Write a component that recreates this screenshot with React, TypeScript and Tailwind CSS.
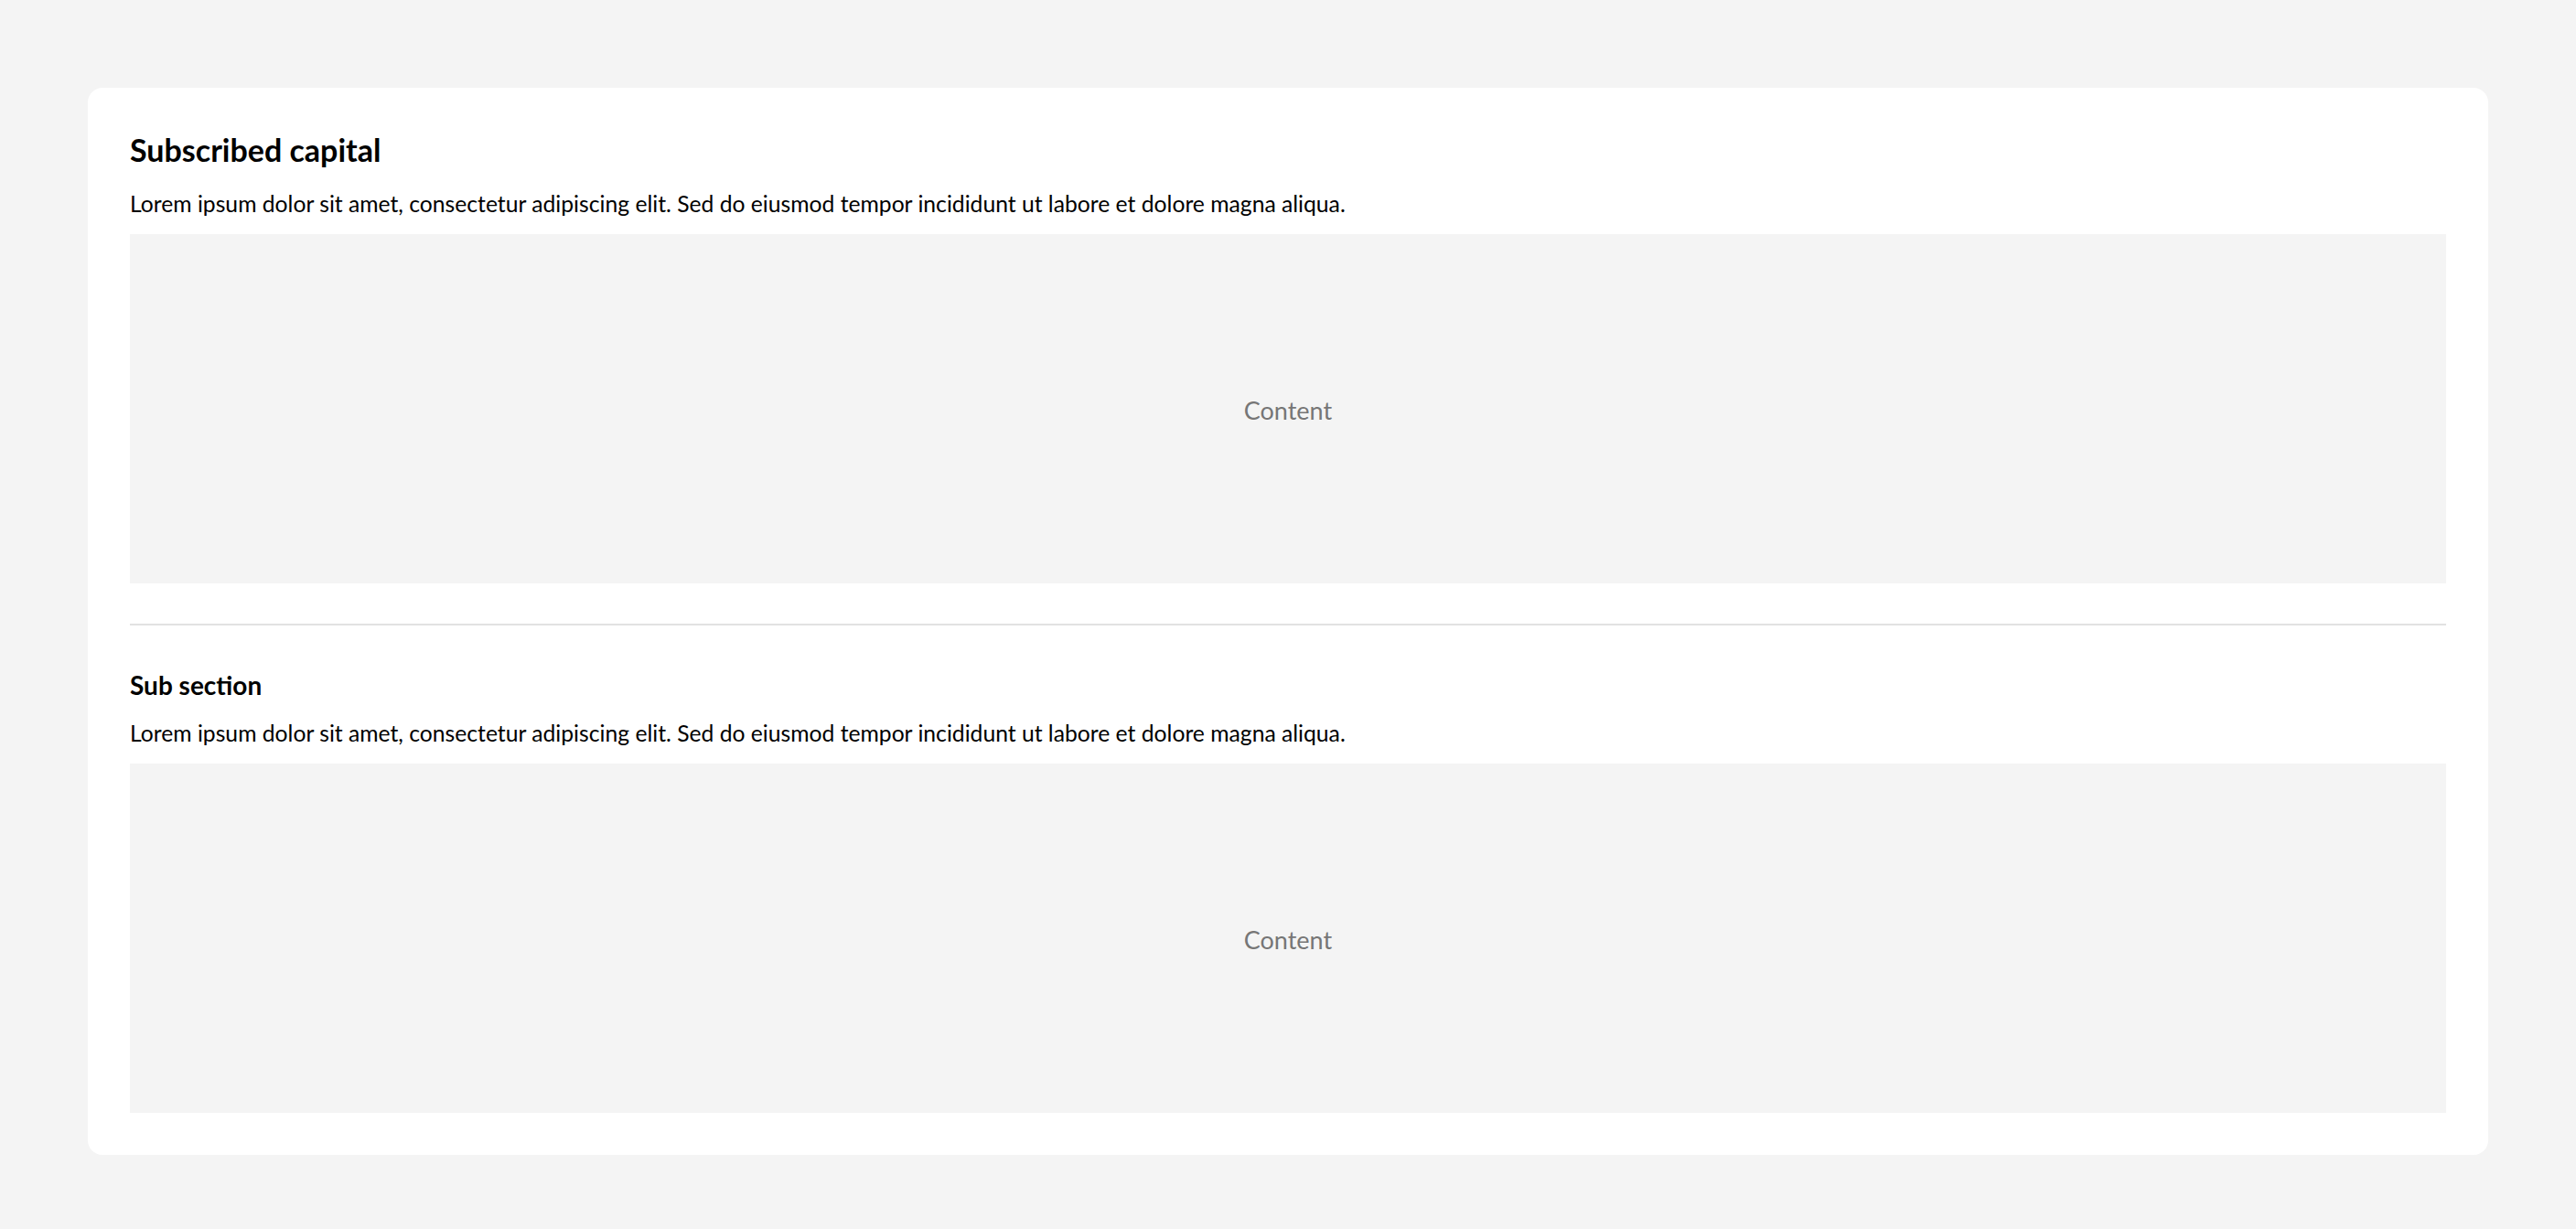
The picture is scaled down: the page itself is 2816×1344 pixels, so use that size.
export default function App() {
  const lorem =
    "Lorem ipsum dolor sit amet, consectetur adipiscing elit. Sed do eiusmod tempor incididunt ut labore et dolore magna aliqua.";

  return (
    <div className="min-h-screen bg-[#f4f4f4] px-[96px] pt-[96px] pb-[78px] font-['Lato',sans-serif] text-black">
      <div className="rounded-2xl bg-white p-[46px]">
        <section>
          <h1 className="mt-[2px] text-[34px] font-bold leading-[1.2]">
            Subscribed capital
          </h1>
          <p className="mt-[22px] text-[24.7px] leading-[32px]">{lorem}</p>
          <div className="mt-[17px] flex h-[382px] items-center justify-center bg-[#f4f4f4]">
            <span className="pt-[4px] text-[27px] text-[#767676]">Content</span>
          </div>
        </section>

        <hr className="mt-[44px] border-t-2 border-[#e2e2e2]" />

        <section className="mt-[49px]">
          <h2 className="text-[28px] font-bold leading-[1.2]">Sub section</h2>
          <p className="mt-[20px] text-[24.7px] leading-[32px]">{lorem}</p>
          <div className="mt-[17px] flex h-[382px] items-center justify-center bg-[#f4f4f4]">
            <span className="pt-[4px] text-[27px] text-[#767676]">Content</span>
          </div>
        </section>
      </div>
    </div>
  );
}
